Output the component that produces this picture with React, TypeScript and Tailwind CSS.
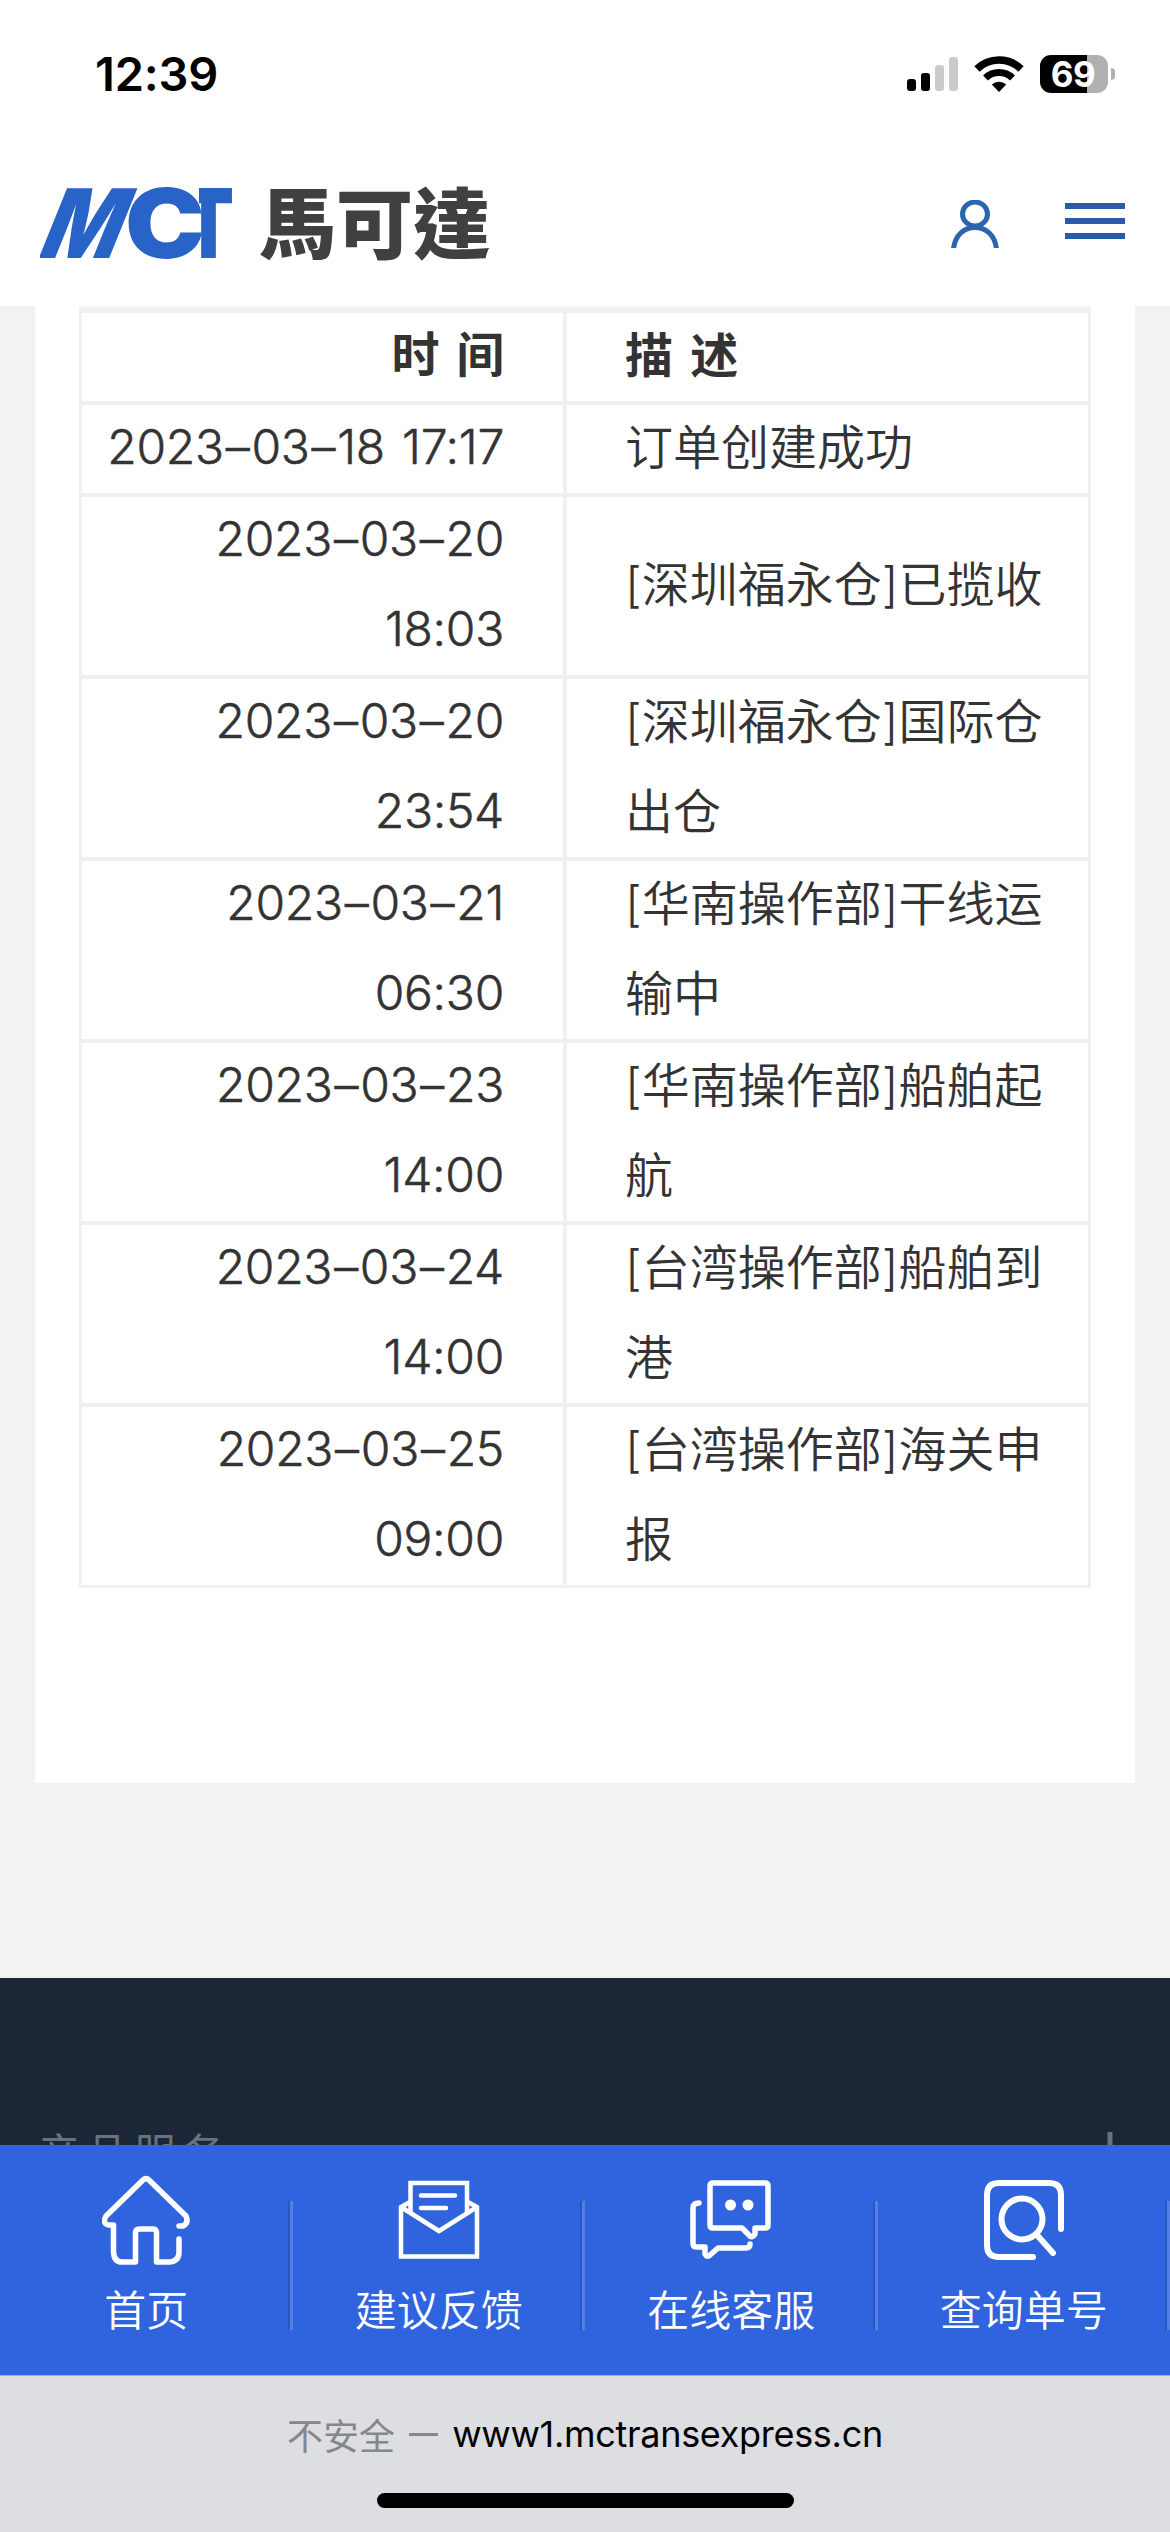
import { Fragment, type ReactNode } from 'react';

type TrackingRow = {
  date: string;
  time: string;
  lines: string[];
};

const ROWS: TrackingRow[] = [
  { date: '2023–03–20', time: '18:03', lines: ['[深圳福永仓]已揽收'] },
  { date: '2023–03–20', time: '23:54', lines: ['[深圳福永仓]国际仓', '出仓'] },
  { date: '2023–03–21', time: '06:30', lines: ['[华南操作部]干线运', '输中'] },
  { date: '2023–03–23', time: '14:00', lines: ['[华南操作部]船舶起', '航'] },
  { date: '2023–03–24', time: '14:00', lines: ['[台湾操作部]船舶到', '港'] },
  { date: '2023–03–25', time: '09:00', lines: ['[台湾操作部]海关申', '报'] },
];

function StatusBar() {
  return (
    <div className="flex h-[148px] items-center justify-between pl-[95px] pr-[55px]">
      <span className="pb-[2px] font-[Inter,sans-serif] text-[47px] font-semibold leading-none tracking-[-0.2px] text-black">
        12:39
      </span>
      <div className="flex items-center">
        <svg width="51" height="36" viewBox="0 0 51 36" className="mr-[16px]">
          <rect x="0" y="23" width="9" height="12" rx="3" fill="#000" />
          <rect x="14" y="17" width="9" height="18" rx="3" fill="#000" />
          <rect x="28" y="9" width="9" height="26" rx="3" fill="#cbcbcb" />
          <rect x="42" y="1" width="9" height="34" rx="3" fill="#cbcbcb" />
        </svg>
        <svg width="50" height="36" viewBox="0 0 50 36" className="mr-[16px]">
          <path d="M3 13 A31.500 31.500 0 0 1 47 13" fill="none" stroke="#000" strokeWidth="7.500" />
          <path d="M11.500 22 A19.500 19.500 0 0 1 38.500 22" fill="none" stroke="#000" strokeWidth="7" />
          <path d="M25 36 L17.800 28.600 A10.500 10.500 0 0 1 32.200 28.600 Z" fill="#000" />
        </svg>
        <div className="flex h-[38px] w-[68px] items-center justify-center rounded-[11px] bg-[linear-gradient(90deg,#000_47px,#b0b0b0_47px)] pr-[2px]">
          <span className="font-[Inter,sans-serif] text-[35px] font-bold leading-none tracking-[-0.5px] text-white">
            69
          </span>
        </div>
        <div className="ml-[3px] h-[12px] w-[4px] rounded-r-full bg-[#b0b0b0]" />
      </div>
    </div>
  );
}

function Logo() {
  return (
    <svg width="460" height="92" viewBox="0 0 460 92" className="block">
      <clipPath id="t-arm">
        <rect x="159" y="0" width="60" height="92" />
      </clipPath>
      <g fill="#2864c8" fontFamily="Inter, sans-serif" fontWeight="900" fontSize="96">
        <text transform="translate(-5 80) skewX(-22)" textLength="78" lengthAdjust="spacingAndGlyphs">M</text>
        <text x="85" y="80" textLength="80" lengthAdjust="spacingAndGlyphs">C</text>
        <g clipPath="url(#t-arm)">
          <text x="143" y="80" textLength="51" lengthAdjust="spacingAndGlyphs">T</text>
        </g>
      </g>
      <text
        x="219"
        y="75"
        fill="#404040"
        fontFamily="'Noto Sans CJK TC', sans-serif"
        fontWeight="900"
        fontSize="77"
      >
        馬可達
      </text>
    </svg>
  );
}

function Header() {
  return (
    <header className="h-[306px] bg-white">
      <StatusBar />
      <div className="flex h-[152px] items-center pl-[40px] pr-[45px]">
        <Logo />
        <svg width="48" height="48" viewBox="0 0 48 48" className="ml-auto mr-[66px]" fill="none" stroke="#2c64ae" strokeWidth="5">
          <ellipse cx="24" cy="14" rx="12.500" ry="12" />
          <path d="M2.500 49 C4 35 13 27.500 24 27.500 S44 35 45.500 49" />
        </svg>
        <div className="mb-[6px] flex flex-col gap-[9px]">
          <i className="h-[6px] w-[60px] bg-[#295ba7]" />
          <i className="h-[6px] w-[60px] bg-[#295ba7]" />
          <i className="h-[6px] w-[60px] bg-[#295ba7]" />
        </div>
      </div>
    </header>
  );
}

function DateText({ value }: { value: string }) {
  return (
    <>
      {value.split('–').map((part, i) => (
        <Fragment key={i}>
          {i > 0 && <span className="px-[2px]">–</span>}
          {part}
        </Fragment>
      ))}
    </>
  );
}

function Row({ left, right, tall }: { left: ReactNode; right: ReactNode; tall?: boolean }) {
  return (
    <div className={`flex border-t-4 border-[#f0f0f0] ${tall ? 'h-[182px]' : 'h-[92px]'}`}>
      <div className="flex w-[485px] items-center justify-end border-r-4 border-[#f0f0f0] pb-[4px] pr-[59px] text-right">
        <div className="-my-2 whitespace-nowrap font-light tracking-[-0.3px] [-webkit-text-stroke:0.5px_#333]">
          {left}
        </div>
      </div>
      <div className="flex flex-1 items-center pb-[3px] pl-[58px]">
        <div className="-my-2 whitespace-nowrap">{right}</div>
      </div>
    </div>
  );
}

function TrackingTable() {
  return (
    <div className="mx-[44px] border-x-[3px] border-b-[3px] border-t-[3px] border-[#f0f0f0] border-t-[#f6f6f6] font-[Inter,'Noto_Sans_CJK_SC',sans-serif] text-[48px] font-[350] leading-[90px] text-[#333]">
      <Row
        left={<b className="font-bold [-webkit-text-stroke:0] [word-spacing:6px]">时 间</b>}
        right={<b className="font-bold [word-spacing:6px]">描 述</b>}
      />
      <Row
        left={
          <span className="[word-spacing:4px]">
            <DateText value="2023–03–18 17:17" />
          </span>
        }
        right="订单创建成功"
      />
      {ROWS.map((row) => (
        <Row
          key={row.date + row.time}
          tall
          left={
            <>
              <div>
                <DateText value={row.date} />
              </div>
              <div>{row.time}</div>
            </>
          }
          right={row.lines.map((line) => (
            <div key={line}>{line}</div>
          ))}
        />
      ))}
    </div>
  );
}

function HomeIcon() {
  return (
    <svg width="88" height="90" viewBox="0 0 88 90" fill="none" stroke="#fff" strokeWidth="5.500" strokeLinecap="round" strokeLinejoin="round">
      <path d="M77 51 H81 Q87 48 84 41 L47 5 Q44 2 41 5 L4 41 Q0 48 6 50 H11.500 V77 Q12 87 20 87 H33.500 V57 Q34 54 38 54 H51 Q54 54 54.500 57 V87 H68 Q77 86 77 77 V64" />
    </svg>
  );
}

function MailIcon() {
  return (
    <svg width="82" height="80" viewBox="0 0 82 80" fill="none" stroke="#fff" strokeWidth="4.500">
      <path d="M12.500 34 V3 H69 V34" />
      <path d="M23 15.500 H57 M23 28 H48" strokeLinecap="round" />
      <path d="M12 22 L3 27 V76.500 H79 V27 L70 22" />
      <path d="M3 27 L41 51 L79 27" />
    </svg>
  );
}

function ChatIcon() {
  return (
    <svg width="82" height="80" viewBox="0 0 82 80" fill="none" stroke="#fff" strokeWidth="5.500" strokeLinecap="round" strokeLinejoin="round">
      <path d="M23 3 H75 Q78 3 78 6 V45 Q78 48 75 48 H65 V54 Q62 59 59 55 L52 48 H23 Q20 48 20 45 V6 Q20 3 23 3 Z" />
      <path d="M9 23 Q3 23 3 28 V63 Q3 67 6 67 H15 V74 Q17 78 20 75 L28 68 H56 Q60 68 60 64" />
      <circle cx="40.500" cy="25" r="5.500" fill="#fff" stroke="none" />
      <circle cx="58" cy="25" r="5.500" fill="#fff" stroke="none" />
    </svg>
  );
}

function SearchIcon() {
  return (
    <svg width="82" height="82" viewBox="0 0 82 82" fill="none" stroke="#fff" strokeWidth="6" strokeLinecap="round">
      <path d="M78 50 V16 Q78 4 66 4 H16 Q4 4 4 16 V66 Q4 78 16 78 H50" />
      <circle cx="39" cy="40" r="20.500" />
      <path d="M54 56 L70 74" />
    </svg>
  );
}

const TABS = [
  { label: '首页', Icon: HomeIcon },
  { label: '建议反馈', Icon: MailIcon },
  { label: '在线客服', Icon: ChatIcon },
  { label: '查询单号', Icon: SearchIcon },
];

function TabBar() {
  return (
    <nav className="grid h-[230px] grid-cols-4 bg-[#3064de]">
      {TABS.map(({ label, Icon }) => (
        <a key={label} className="flex">
          <div className="flex flex-1 flex-col items-center pl-[5px]">
            <div className="flex h-[150px] items-center">
              <Icon />
            </div>
            <span className="-mt-[7px] whitespace-nowrap font-['Noto_Sans_CJK_SC',sans-serif] text-[42px] font-[350] leading-[40px] text-white">
              {label}
            </span>
          </div>
          <div className="mt-[56px] h-[129px] w-[5px] border-l-2 border-[#2a56c0] bg-[#527fe6]" />
        </a>
      ))}
    </nav>
  );
}

export default function App() {
  return (
    <div className="flex h-[2532px] w-[1170px] flex-col overflow-hidden bg-[#f2f2f2]">
      <Header />
      <main className="h-[1672px] shrink-0">
        <section className="mx-[35px] h-[1477px] bg-white">
          <TrackingTable />
        </section>
      </main>
      <footer className="flex h-[167px] shrink-0 items-end justify-between overflow-hidden bg-[#1b2737] pl-[38px] pr-[44px] text-[#68727d]">
        <div className="h-[20px] whitespace-nowrap font-['Noto_Sans_CJK_SC',sans-serif] text-[42px] font-normal leading-[52px] tracking-[6px]">
          产品服务
        </div>
        <svg width="32" height="13" viewBox="0 0 32 13">
          <path d="M16 0 V32" stroke="currentColor" strokeWidth="5" />
        </svg>
      </footer>
      <TabBar />
      <div className="flex flex-1 flex-col items-center border-t border-[#a9b2c9] bg-[#dddee1] pt-[32px]">
        <p className="flex items-center whitespace-nowrap text-[36px] leading-[52px]">
          <span className="font-['Noto_Sans_CJK_SC',sans-serif] text-[#86878a]">不安全</span>
          <i className="mx-[14px] h-[3px] w-[29px] bg-[#86878a]" />
          <span className="font-[Inter,sans-serif] tracking-[-0.3px] text-black">www1.mctransexpress.cn</span>
        </p>
        <div className="mt-[33px] h-[15px] w-[417px] rounded-full bg-black" />
      </div>
    </div>
  );
}
